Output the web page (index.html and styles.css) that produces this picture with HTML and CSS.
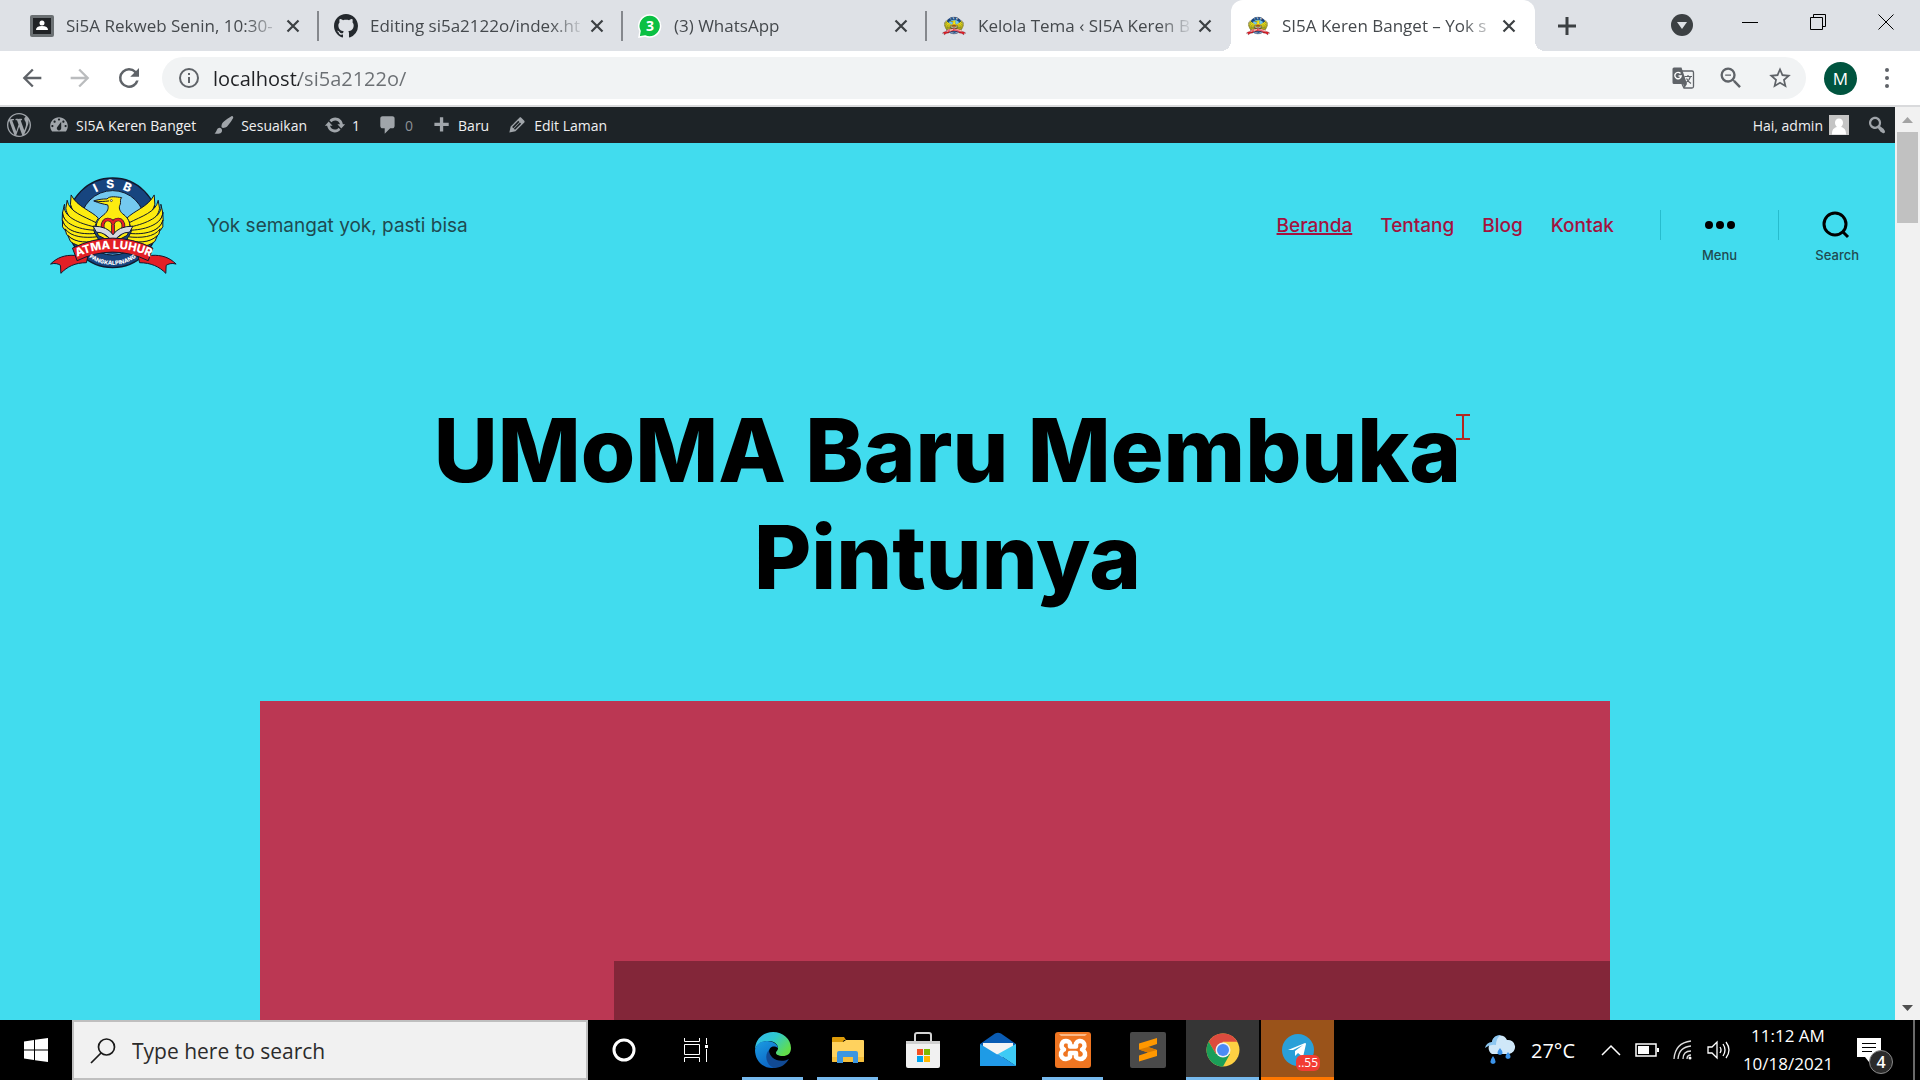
FILE: index.html
```html
<!DOCTYPE html>
<html lang="id">
<head>
<meta charset="utf-8">
<meta name="viewport" content="width=device-width, initial-scale=1">
<title>SI5A Keren Banget – Yok semangat yok, pasti bisa</title>
<link rel="stylesheet" href="styles.css">
</head>
<body>
<svg class="defs" aria-hidden="true">
  <defs>
    <path id="arc-top" d="M104 114 A105 105 0 0 1 302 114"/>
    <path id="arc-ribbon" d="M90 253 Q205 199 322 253"/>
    <path id="arc-bottom" d="M118 240 A122 122 0 0 0 288 240"/>
    <g id="wing">
      <path d="M78 64 C96 100 140 112 160 134 L150 150 C110 138 84 124 76 92 Z"/>
      <path d="M66 80 C72 116 116 128 154 148 L148 162 C104 156 66 138 62 104 Z"/>
      <path d="M58 92 C50 130 104 150 148 160 L146 172 C98 172 58 156 52 118 Z"/>
      <path d="M52 116 C52 150 100 168 146 170 L150 182 C108 186 62 176 51 140 Z"/>
      <path d="M52 140 C60 174 108 184 150 180 L156 192 C116 200 70 194 52 160 Z"/>
      <path d="M60 166 C78 192 120 194 156 190 L162 202 C126 214 84 208 64 182 Z"/>
      <path d="M68 186 C92 210 130 208 162 200 L172 212 C140 226 98 222 76 204 Z"/>
    </g>
    <symbol id="crest" viewBox="12 10 384 292">
      <circle cx="203" cy="148" r="135" fill="#17457f" stroke="#10182c" stroke-width="4"/>
      <circle cx="203" cy="148" r="97" fill="#74c9ef" stroke="#10182c" stroke-width="3"/>
      <path d="M124 200 A96 96 0 0 0 282 200 L282 170 L124 170Z" fill="#17457f"/>
      <g fill="#fdec10" stroke="#10182c" stroke-width="3" stroke-linejoin="round">
        <use href="#wing"/>
        <use href="#wing" transform="translate(406 0) scale(-1 1)"/>
        <path d="M146 82 C164 76 180 76 186 76 C194 66 214 70 230 72 C224 78 228 84 226 92 C220 102 224 112 232 120 C256 136 262 160 246 186 L204 208 L160 186 C148 160 152 140 176 124 C188 114 192 104 188 94 C176 92 160 88 146 82Z"/>
        <path d="M148 83 C166 84 178 84 192 82" fill="none"/>
      </g>
      <circle cx="199" cy="81" r="3" fill="#fff" stroke="#10182c" stroke-width="2"/>
      <path d="M204 194 C162 178 168 138 188 138 Q202 138 204 152 Q206 138 220 138 C240 138 246 178 204 194Z M204 154 V190" fill="#fdec10" stroke="#10182c" stroke-width="11"/>
      <path d="M204 194 C162 178 168 138 188 138 Q202 138 204 152 Q206 138 220 138 C240 138 246 178 204 194Z M204 154 V190" fill="none" stroke="#e31f26" stroke-width="7"/>
      <path d="M144 158 Q188 158 204 184 Q220 158 264 158 L254 176 Q224 176 204 208 Q184 176 154 176Z" fill="#d5d9df" stroke="#10182c" stroke-width="3"/>
      <g fill="#e31f26" stroke="#10182c" stroke-width="3" stroke-linejoin="round">
        <path d="M88 246 C60 244 36 252 16 272 C30 268 40 272 46 276 L47 300 C66 280 90 268 124 268 L128 250Z"/>
        <path d="M320 246 C350 244 374 252 394 272 C380 268 370 272 364 276 L363 300 C344 280 318 268 284 268 L280 250Z"/>
        <path d="M82 224 Q203 164 324 224 L310 262 Q203 210 96 262Z"/>
      </g>
      <g class="crest-text">
        <text font-size="36"><textPath href="#arc-top" startOffset="50%" text-anchor="middle">I&#160;&#160;&#160;S&#160;&#160;&#160;B</textPath></text>
        <text font-size="34"><textPath href="#arc-ribbon" startOffset="50%" text-anchor="middle">ATMA LUHUR</textPath></text>
        <text font-size="17"><textPath href="#arc-bottom" startOffset="50%" text-anchor="middle">PANGKALPINANG</textPath></text>
      </g>
    </symbol>
    <symbol id="close" viewBox="0 0 14 14"><path d="M1.500 1.500l11 11m0-11l-11 11" stroke="#3c4043" stroke-width="2.200" fill="none"/></symbol>
  </defs>
</svg>

<header class="tabstrip">
  <div class="tabs">
    <div class="tab">
      <svg class="favicon" viewBox="0 0 24 24"><rect y="1" width="24" height="22" rx="2" fill="#6b7073"/><rect x="3" y="4" width="18" height="16" fill="#202225"/><circle cx="12" cy="9" r="2.500" fill="#fff"/><path d="M6 16q0-4 6-4t6 4z" fill="#fff"/></svg>
      <a class="tab-title" href="#">Si5A Rekweb Senin, 10:30-</a>
      <button class="tab-close" aria-label="Tutup tab"><svg><use href="#close"/></svg></button>
    </div>
    <div class="tab">
      <svg class="favicon" viewBox="0 0 16 16"><path fill="#24292e" d="M8 0C3.580 0 0 3.580 0 8c0 3.540 2.290 6.530 5.470 7.590.4.070.55-.17.55-.38 0-.19-.01-.82-.01-1.490-2.010.37-2.530-.49-2.690-.94-.09-.23-.48-.94-.82-1.130-.28-.15-.68-.52-.01-.53.63-.01 1.080.58 1.230.82.72 1.210 1.870.87 2.330.66.07-.52.28-.87.51-1.070-1.780-.2-3.640-.89-3.640-3.950 0-.87.31-1.590.82-2.150-.08-.2-.36-1.020.08-2.120 0 0 .67-.21 2.200.82.64-.18 1.320-.27 2-.27s1.360.09 2 .27c1.530-1.040 2.200-.82 2.200-.82.44 1.100.16 1.920.08 2.120.51.56.82 1.270.82 2.150 0 3.070-1.870 3.750-3.650 3.950.29.25.54.73.54 1.480 0 1.070-.01 1.930-.01 2.200 0 .21.15.46.55.38A8.010 8.010 0 0 0 16 8c0-4.420-3.580-8-8-8z"/></svg>
      <a class="tab-title" href="#">Editing si5a2122o/index.ht</a>
      <button class="tab-close" aria-label="Tutup tab"><svg><use href="#close"/></svg></button>
    </div>
    <div class="tab">
      <svg class="favicon" viewBox="0 0 24 24"><path d="M12 1a11 11 0 1 1-5 21L1 23l1-6A11 11 0 0 1 12 1z" fill="#0ac043" stroke="#fff" stroke-width="1.500"/><text x="12" y="17" class="wa-count">3</text></svg>
      <a class="tab-title" href="#">(3) WhatsApp</a>
      <button class="tab-close" aria-label="Tutup tab"><svg><use href="#close"/></svg></button>
    </div>
    <div class="tab">
      <svg class="favicon"><use href="#crest"/></svg>
      <a class="tab-title" href="#">Kelola Tema ‹ SI5A Keren B</a>
      <button class="tab-close" aria-label="Tutup tab"><svg><use href="#close"/></svg></button>
    </div>
    <div class="tab active">
      <svg class="favicon"><use href="#crest"/></svg>
      <a class="tab-title" href="#">SI5A Keren Banget – Yok s</a>
      <button class="tab-close" aria-label="Tutup tab"><svg><use href="#close"/></svg></button>
    </div>
    <button class="new-tab" aria-label="Tab baru"><svg width="18" height="18" viewBox="0 0 18 18"><path d="M9 0v18M0 9h18" stroke="#3c4043" stroke-width="3"/></svg></button>
  </div>
  <div class="window-controls">
    <button class="tab-search" aria-label="Cari tab"><svg width="22" height="22" viewBox="0 0 22 22"><circle cx="11" cy="11" r="11" fill="#3c4043"/><path d="M6 8h10l-5 7z" fill="#dee1e6"/></svg></button>
    <button aria-label="Minimize"><svg width="16" height="16" viewBox="0 0 16 16"><path d="M0 8.500h16" stroke="#000"/></svg></button>
    <button aria-label="Restore"><svg width="16" height="16" viewBox="0 0 16 16"><path d="M.5 3.500h12v12H.5zM3.500 3V.5h12v12H13" fill="none" stroke="#000"/></svg></button>
    <button aria-label="Close"><svg width="16" height="16" viewBox="0 0 16 16"><path d="M.5.5l15 15m0-15l-15 15" stroke="#000"/></svg></button>
  </div>
</header>

<nav class="toolbar" aria-label="Browser">
  <button aria-label="Kembali"><svg width="28" height="28" viewBox="0 0 24 24"><path fill="#5f6368" d="M20 11H7.830l5.590-5.590L12 4l-8 8 8 8 1.410-1.410L7.830 13H20z"/></svg></button>
  <button aria-label="Maju"><svg width="28" height="28" viewBox="0 0 24 24"><path fill="#babcbe" d="M12 4l-1.410 1.410L16.170 11H4v2h12.170l-5.580 5.590L12 20l8-8z"/></svg></button>
  <button aria-label="Muat ulang"><svg width="30" height="30" viewBox="0 0 24 24"><path fill="#5f6368" d="M17.650 6.350A7.960 7.960 0 0 0 12 4a8 8 0 1 0 7.730 10h-2.080A6 6 0 1 1 12 6c1.660 0 3.140.69 4.220 1.780L13 11h7V4z"/></svg></button>
  <div class="omnibox">
    <svg width="24" height="24" viewBox="0 0 24 24"><path fill="#5f6368" d="M11 7h2v2h-2zm0 4h2v6h-2zm1-9a10 10 0 1 0 0 20 10 10 0 0 0 0-20zm0 18a8 8 0 1 1 0-16 8 8 0 0 1 0 16z"/></svg>
    <input type="text" aria-label="Alamat" value="localhost/si5a2122o/">
    <div class="omnibox-actions">
      <button aria-label="Terjemahkan"><svg width="24" height="24" viewBox="0 0 24 24"><path d="M10 5h11a1.500 1.500 0 0 1 1.500 1.500v14A1.500 1.500 0 0 1 21 22h-8l-2-4" fill="none" stroke="#5f6368" stroke-width="1.300"/><path fill="#5f6368" d="M3 1.500h7.500L16 18H3a1.500 1.500 0 0 1-1.500-1.500V3A1.500 1.500 0 0 1 3 1.500zM12 18l1.500 4 2.500-4z"/><path d="M9.500 7.500A3.200 3.200 0 1 0 10.200 10H7.500" fill="none" stroke="#fff" stroke-width="1.400"/><path d="M13.500 10.500H21M17 9v1.500M19.500 10.500q-1 4-4.500 6M15.500 12.500q1.500 3 4.500 5" fill="none" stroke="#5f6368" stroke-width="1.200"/></svg></button>
      <button aria-label="Zoom"><svg width="28" height="28" viewBox="0 0 24 24"><path fill="#5f6368" d="M15.500 14h-.79l-.28-.27A6.470 6.470 0 0 0 16 9.500 6.500 6.500 0 1 0 9.500 16c1.610 0 3.090-.59 4.230-1.570l.27.28v.79l5 4.990L20.490 19zm-6 0a4.500 4.500 0 1 1 0-9 4.500 4.500 0 0 1 0 9zM7 9h5v1H7z"/></svg></button>
      <button aria-label="Bookmark"><svg width="26" height="26" viewBox="0 0 24 24"><path fill="#5f6368" d="M22 9.240l-7.190-.62L12 2 9.190 8.630 2 9.240l5.460 4.730L5.820 21 12 17.270 18.180 21l-1.630-7.030zM12 15.400l-3.760 2.270 1-4.280-3.320-2.880 4.380-.38L12 6.100l1.710 4.040 4.380.38-3.320 2.880 1 4.280z"/></svg></button>
    </div>
  </div>
  <button class="profile" aria-label="Profil M">M</button>
  <button aria-label="Menu"><svg width="24" height="24" viewBox="0 0 24 24" fill="#5f6368"><circle cx="12" cy="4" r="2"/><circle cx="12" cy="12" r="2"/><circle cx="12" cy="20" r="2"/></svg></button>
</nav>

<div class="viewport">
  <div class="page">
    <nav class="adminbar" aria-label="Toolbar admin">
      <a href="#" aria-label="WordPress"><svg class="wp" viewBox="0 0 20 20"><path d="M20 10c0-5.510-4.490-10-10-10C4.480 0 0 4.490 0 10c0 5.520 4.480 10 10 10 5.510 0 10-4.480 10-10zM7.780 15.370L4.370 6.220c.55-.02 1.170-.08 1.170-.08.5-.06.44-1.130-.06-1.110 0 0-1.450.11-2.370.11-.18 0-.37 0-.58-.01C4.120 2.690 6.870 1.110 10 1.110c2.330 0 4.450.87 6.050 2.340-.68-.11-1.650.39-1.650 1.580 0 .74.45 1.360.9 2.100.35.61.55 1.360.55 2.460 0 1.490-1.400 5-1.400 5l-3.030-8.370c.54-.02.82-.17.82-.17.5-.05.44-1.250-.06-1.220 0 0-1.440.12-2.380.12-.87 0-2.330-.12-2.330-.12-.5-.03-.56 1.200-.06 1.220l.92.08 1.260 3.410zM17.410 10c.24-.64.74-1.870.43-4.250.7 1.290 1.050 2.710 1.050 4.250 0 3.290-1.730 6.240-4.400 7.780.97-2.590 1.940-5.200 2.920-7.780zM6.100 18.090C3.120 16.650 1.110 13.530 1.110 10c0-1.300.23-2.480.72-3.590C3.250 10.300 4.670 14.200 6.100 18.090zm4.030-6.630l2.580 6.980c-.86.29-1.760.45-2.710.45-.79 0-1.570-.11-2.290-.33.81-2.380 1.620-4.740 2.420-7.100z"/></svg></a>
      <a href="#"><svg viewBox="0 0 20 20"><path d="M3.760 16h12.480c1.100-1.370 1.760-3.110 1.760-5 0-4.420-3.580-8-8-8s-8 3.580-8 8c0 1.890.66 3.630 1.760 5zM10 4c.55 0 1 .45 1 1s-.45 1-1 1-1-.45-1-1 .45-1 1-1zM6 6c.55 0 1 .45 1 1s-.45 1-1 1-1-.45-1-1 .45-1 1-1zm8 0c.55 0 1 .45 1 1s-.45 1-1 1-1-.45-1-1 .45-1 1-1zm-5.370 5.550L12 7v6c0 1.100-.9 2-2 2s-2-.9-2-2c0-.57.24-1.080.63-1.450zM4 10c.55 0 1 .45 1 1s-.45 1-1 1-1-.45-1-1 .45-1 1-1zm12 0c.55 0 1 .45 1 1s-.45 1-1 1-1-.45-1-1 .45-1 1-1z"/></svg>SI5A Keren Banget</a>
      <a href="#"><svg viewBox="0 0 20 20"><path d="M18.330 3.570s.27-.8-.31-1.360c-.53-.52-1.220-.24-1.220-.24-.61.3-5.760 3.470-7.670 5.570-.86.96-2.060 3.790-1.090 4.820.92.98 3.960-.17 4.790-1 2.060-2.060 5.210-7.170 5.500-7.790zM1.400 17.650c2.370-1.560 1.460-3.410 3.230-4.640.93-.65 2.220-.62 3.080.29.63.67.8 2.570-.16 3.460-1.570 1.450-4 1.550-6.150.89z"/></svg>Sesuaikan</a>
      <a href="#"><svg viewBox="0 0 20 20"><path d="M10.200 3.280c3.530 0 6.430 2.610 6.920 6h2.080l-3.500 4-3.500-4h2.320c-.45-1.970-2.210-3.450-4.320-3.450-1.450 0-2.730.71-3.540 1.780L4.950 5.660C6.230 4.200 8.110 3.280 10.200 3.280zm-.4 13.440c-3.520 0-6.430-2.610-6.920-6H.8l3.500-4c1.170 1.330 2.330 2.670 3.500 4H5.480c.45 1.970 2.210 3.450 4.320 3.450 1.450 0 2.730-.71 3.540-1.780l1.710 1.950c-1.280 1.460-3.150 2.380-5.250 2.380z"/></svg>1</a>
      <a href="#" class="muted"><svg viewBox="0 0 20 20"><path d="M5 2h9q.82 0 1.410.59T16 4v7q0 .82-.59 1.410T14 13h-2l-5 5v-5H5q-.82 0-1.410-.59T3 11V4q0-.82.59-1.410T5 2z"/></svg>0</a>
      <a href="#"><svg viewBox="0 0 20 20"><path d="M17 8v3h-5v5H9v-5H4V8h5V3h3v5h5z"/></svg>Baru</a>
      <a href="#"><svg viewBox="0 0 20 20"><path d="M13.890 3.390l2.710 2.720c.46.46.42 1.240.03 1.640l-8.010 8.020-5.560 1.160 1.160-5.580s7.600-7.630 7.990-8.030c.39-.39 1.220-.39 1.680.07zm-2.730 2.790l-5.590 5.610 1.110 1.110 5.540-5.650zm-2.970 8.230l5.580-5.600-1.070-1.080-5.590 5.600z"/></svg>Edit Laman</a>
      <a href="#" class="account">Hai, admin<svg viewBox="0 0 20 20"><path fill="#c4c4c4" d="M0 0h20v20H0z"/><path fill="#fff" d="M10 3.500c2.500 0 4 1.800 4 4.300 0 2-1 3.500-2 4.200 3 .8 5 2.500 5 7v.5H3V19c0-4.500 2-6.200 5-7-1-.7-2-2.200-2-4.200 0-2.500 1.500-4.300 4-4.300z"/></svg></a>
      <a href="#" aria-label="Cari"><svg viewBox="0 0 20 20"><path d="M12.140 4.180c1.870 1.870 2.110 4.750.72 6.890.12.1.22.21.36.31.2.16.47.36.81.59.34.24.56.39.66.47.42.31.73.57.94.78.32.32.6.65.84 1 .25.35.44.69.59 1.040.14.35.21.68.18 1-.02.32-.14.59-.36.81s-.49.34-.81.36c-.31.02-.65-.04-.99-.19-.35-.14-.7-.34-1.040-.59-.35-.24-.68-.52-1-.84-.21-.21-.47-.52-.77-.93-.1-.13-.25-.35-.47-.66-.22-.32-.4-.57-.56-.78-.16-.2-.29-.35-.44-.5-2.070 1.090-4.690.76-6.440-.98-2.140-2.150-2.140-5.640 0-7.780 2.150-2.150 5.630-2.150 7.780 0zm-1.410 6.360c1.360-1.370 1.360-3.580 0-4.950-1.370-1.370-3.590-1.370-4.950 0-1.370 1.370-1.370 3.580 0 4.950 1.360 1.370 3.580 1.370 4.950 0z"/></svg></a>
    </nav>

    <header class="site-header">
      <a href="#" class="site-logo" aria-label="ISB Atma Luhur"><svg><use href="#crest"/></svg></a>
      <p class="tagline">Yok semangat yok, pasti bisa</p>
      <nav class="site-nav" aria-label="Menu utama">
        <a href="#" class="current">Beranda</a>
        <a href="#">Tentang</a>
        <a href="#">Blog</a>
        <a href="#">Kontak</a>
      </nav>
      <div class="toggles">
        <button class="toggle"><svg width="30" height="30" viewBox="0 0 30 30"><circle cx="4" cy="15" r="4"/><circle cx="15" cy="15" r="4"/><circle cx="26" cy="15" r="4"/></svg><span>Menu</span></button>
        <button class="toggle"><svg width="30" height="30" viewBox="0 0 30 30"><circle cx="14" cy="14" r="11" fill="none" stroke="#000" stroke-width="3"/><path d="M22 22l5 5" stroke="#000" stroke-width="3"/></svg><span>Search</span></button>
      </div>
    </header>

    <main class="entry">
      <div class="title-wrap">
        <h1>UMoMA Baru Membuka Pintunya</h1>
        <svg class="cursor" viewBox="0 0 14 26"><path d="M0 1h6l1 1 1-1h6M7 2v22M0 25h6l1-1 1 1h6" fill="none" stroke="#b3261e" stroke-width="2"/></svg>
      </div>
      <div class="artwork"><div class="artwork-block"></div></div>
    </main>
  </div>
  <div class="scrollbar" aria-hidden="true">
    <svg width="11" height="6" viewBox="0 0 11 6"><path d="M0 6h11L5.500 0z" fill="#a3a3a3"/></svg>
    <div class="thumb"></div>
    <svg width="11" height="6" viewBox="0 0 11 6"><path d="M0 0h11L5.500 6z" fill="#505050"/></svg>
  </div>
</div>

<footer class="taskbar">
  <button class="start" aria-label="Start"><svg width="24" height="24" viewBox="0 0 24 24" fill="#fff"><path d="M0 3.500l10-1.500v9.500H0zM11 1.800L24 0v11.500H11zM0 12.500h10V22L0 20.500zM11 12.500h13V24l-13-1.800z"/></svg></button>
  <label class="search">
    <svg width="26" height="26" viewBox="0 0 26 26"><circle cx="16.500" cy="9" r="8" fill="none" stroke="#1a1a1a" stroke-width="1.700"/><path d="M11 15L1 25" stroke="#1a1a1a" stroke-width="1.700"/></svg>
    <input type="search" placeholder="Type here to search" aria-label="Type here to search">
  </label>
  <div class="system">
    <button aria-label="Cortana"><svg width="24" height="24" viewBox="0 0 24 24"><circle cx="12" cy="12" r="10" fill="none" stroke="#fff" stroke-width="3"/></svg></button>
    <button aria-label="Task View"><svg width="24" height="24" viewBox="0 0 24 24" fill="none" stroke="#fff"><path d="M.5 0v3.500h15V0M.5 6.500h15v10H.5zM.5 24v-4.500h15V24M22.500 0v6M22.500 11v13"/><path d="M21 7h3v3h-3z" fill="#fff" stroke="none"/></svg></button>
  </div>
  <div class="apps">
    <button class="running" aria-label="Microsoft Edge"><svg viewBox="0 0 36 36">
      <defs><linearGradient id="edge-a" x1="0" y1="0" x2="1" y2=".6"><stop offset="0" stop-color="#35b8f1"/><stop offset=".5" stop-color="#2fc9d0"/><stop offset="1" stop-color="#62dd4a"/></linearGradient><linearGradient id="edge-b" x1="0" y1="0" x2=".6" y2="1"><stop offset="0" stop-color="#1b9de2"/><stop offset="1" stop-color="#0b63c4"/></linearGradient></defs>
      <path d="M0 18C0 7 8 0 18 0s18 7 18 16c0 6-4 8-8 8-5 0-7-2-7-3 0-2 2-2 2-5s-3-7-9-7C6 9 1 13 0 18z" fill="url(#edge-a)"/>
      <path d="M0 18C1 12 6 9 12 9c7 0 11 4 11 7-2-2-9-3-9 4 0 8 7 12 13 11-3 3-6 5-10 5C7 36 0 28 0 18z" fill="url(#edge-b)"/>
      <path d="M14 18c-5 5-3 15 5 18 7 0 12-4 15-9-10 5-20-1-20-9z" fill="#114a94"/></svg></button>
    <button class="running" aria-label="File Explorer"><svg viewBox="0 0 36 36"><path d="M2 6q0-1 1-1h11l2 3h-2l-2 3H2z" fill="#dd9b09"/><path d="M2 10h11l3-2h17q1 0 1 1v20q0 1-1 1H3q-1 0-1-1z" fill="#ffd25e"/><path d="M2 25h32v4q0 1-1 1H3q-1 0-1-1z" fill="#f6c03c"/><path d="M7 31V21q0-2 2-2h17q2 0 2 2v10h-5v-6H13v6z" fill="#3c96e0"/></svg></button>
    <button aria-label="Microsoft Store"><svg viewBox="0 0 36 36"><path d="M10 12V3q0-2 2-2h12q2 0 2 2v9" fill="none" stroke="#d4d4d4" stroke-width="2"/><path d="M1 9h34v25q0 2-2 2H3q-2 0-2-2z" fill="#f1f1f1"/><path d="M1 9h34v3H1z" fill="#cfcfcf"/><path d="M12 17h6v6h-6z" fill="#f25022"/><path d="M19 17h6v6h-6z" fill="#7fba00"/><path d="M12 24h6v6h-6z" fill="#00a4ef"/><path d="M19 24h6v6h-6z" fill="#ffb900"/></svg></button>
    <button aria-label="Mail"><svg viewBox="0 0 36 36"><path d="M0 12L15 1.500q3-1.500 6 0L36 12v5H0z" fill="#0a5cb4"/><path d="M3 11h30v8L18 28 3 17z" fill="#f4f4f4"/><path d="M0 12l36 22H0z" fill="#1e9be6"/><path d="M36 12v22L18 22z" fill="#3dcbf5"/><path d="M0 34h36L18 22z" fill="#2199e8"/></svg></button>
    <button class="running" aria-label="XAMPP"><svg viewBox="0 0 36 36"><rect width="36" height="36" rx="3" fill="#ef7521"/><path d="M4 2h28l-2 2H6z" fill="#fbb885"/><path d="M11 9a4.500 4.500 0 0 0-2 8.500 5 5 0 1 0 6 7.500v-4h6v4a5 5 0 1 0 6-7.500 4.500 4.500 0 1 0-6-6v3h-6v-3a4.500 4.500 0 0 0-4-2.500z" fill="none" stroke="#fff" stroke-width="4.500" stroke-linejoin="round"/></svg></button>
    <button aria-label="Sublime Text"><svg viewBox="0 0 36 36"><rect width="36" height="36" rx="2" fill="#4a4a4a"/><path d="M27 6v6l-9 3 9 3v6L9 29.500v-6l9-3-9-3v-6z" fill="#ff9800"/><path d="M9 17.500l9 3 9-2.500-9-3z" fill="#d97a00"/></svg></button>
    <button class="running current" aria-label="Google Chrome"><svg viewBox="0 0 36 36"><circle cx="18" cy="18" r="16.500" fill="#fdd043"/><path d="M3.700 9.800A16.500 16.500 0 0 1 32.300 9.800H18L11 22z" fill="#dd4b3e"/><path d="M3.700 9.800A16.500 16.500 0 0 0 18 34.500l7-12.500H11z" fill="#1b9e58"/><circle cx="18" cy="18" r="7.500" fill="#f1f1f1"/><circle cx="18" cy="18" r="6" fill="#4b8bf5"/></svg></button>
    <button class="running alert" aria-label="Telegram"><svg viewBox="0 0 36 36"><circle cx="18" cy="18" r="16" fill="#2a9fd8"/><path d="M8 18l17-7q1 0 1 1l-3 13-5-4-3 3v-5l8-6-10 5z" fill="#fff"/></svg><span class="count">..55</span></button>
  </div>
  <div class="tray">
    <button class="weather"><svg width="32" height="32" viewBox="0 0 32 32"><path d="M8 20a7 7 0 0 1 0-12 8 8 0 0 1 15-2 7 7 0 0 1 2 14z" fill="#cfe7f8"/><path d="M1 14a7 7 0 0 1 7-6 8 8 0 0 1 9-7q-5 3-5 10-6-1-11 3z" fill="#8cc6f0"/><g fill="#3b93ea"><path d="M16 14q5 6 0 7-5-1 0-7zM24 18q5 6 0 7-5-1 0-7zM9 22q5 7 0 8-5-1 0-8z"/></g></svg><span>27°C</span></button>
    <button aria-label="Tampilkan ikon"><svg width="20" height="12" viewBox="0 0 20 12"><path d="M1 11l9-9 9 9" fill="none" stroke="#fff" stroke-width="1.500"/></svg></button>
    <button aria-label="Baterai"><svg width="24" height="14" viewBox="0 0 24 14"><path d="M1 1h20v12H1z" fill="none" stroke="#fff" stroke-width="1.500"/><path d="M3 3h11v8H3zM22 5h2v4h-2z" fill="#fff"/></svg></button>
    <button aria-label="Wi-Fi"><svg width="20" height="20" viewBox="0 0 20 20" fill="none" stroke="#ddd" stroke-width="1.300"><path d="M1 19Q2 3 18 1M5 19Q6 7 18 6M10 19q0-8 8-8M14 19q0-4 4-4"/><circle cx="17" cy="18" r="1.500" fill="#fff" stroke="none"/></svg></button>
    <button aria-label="Volume"><svg width="24" height="20" viewBox="0 0 24 20" fill="none" stroke="#fff" stroke-width="1.300"><path d="M1 7h4l5-5v16l-5-5H1zM13 7q2 3 0 6M16 4q4 6 0 12M19 2q6 8 0 16"/></svg></button>
    <button class="clock"><time>11:12 AM</time><time>10/18/2021</time></button>
    <button class="notifications" aria-label="Notifikasi"><svg width="24" height="24" viewBox="0 0 24 24"><path d="M0 0h24v19h-8l-4 5-4-5H0z" fill="#fff"/><path d="M5 5.500h14M5 9.500h14M5 13.500h10" stroke="#000"/></svg><span class="badge">4</span></button>
  </div>
</footer>
</body>
</html>
```

FILE: styles.css
```css
* { box-sizing: border-box; }

body {
  margin: 0;
  height: 100vh;
  display: flex;
  flex-direction: column;
  overflow: hidden;
  font-family: "Open Sans", "Noto Sans", sans-serif;
  color: #202124;
}

button {
  display: flex;
  align-items: center;
  justify-content: center;
  padding: 0;
  border: 0;
  background: none;
  font: inherit;
  color: inherit;
}

a { color: inherit; text-decoration: none; }
svg { display: block; flex: none; }
.defs { position: absolute; width: 0; height: 0; }
.crest-text { fill: #fff; font-family: Inter, sans-serif; font-weight: 800; }
.wa-count { fill: #fff; font: bold 14px "Open Sans", sans-serif; text-anchor: middle; }

/* Tab strip */
.tabstrip {
  display: flex;
  justify-content: space-between;
  height: 51px;
  flex: none;
  background: #dee1e6;
}
.tabs { display: flex; flex: 1; min-width: 0; padding-left: 15px; }
.tab {
  position: relative;
  display: flex;
  align-items: center;
  flex: 0 1 304px;
  min-width: 0;
  padding: 0 19px 0 15px;
}
.tab:not(.active)::after {
  content: "";
  position: absolute;
  right: 0;
  width: 2px;
  height: 30px;
  background: #85888d;
}
.tab:nth-child(4)::after { display: none; }
.tab.active { background: #fff; border-radius: 12px 12px 0 0; }
.tab.active::before,
.tab.active::after {
  content: "";
  position: absolute;
  bottom: 0;
  width: 10px;
  height: 10px;
}
.tab.active::before { left: -10px; background: radial-gradient(circle at 0 0, transparent 10px, #fff 10px); }
.tab.active::after { right: -10px; background: radial-gradient(circle at 100% 0, transparent 10px, #fff 10px); }
.favicon { width: 24px; height: 24px; }
.tab-title {
  flex: 1;
  min-width: 0;
  margin: 0 4px 0 12px;
  overflow: hidden;
  white-space: nowrap;
  font-size: 17px;
  color: #45494d;
  mask-image: linear-gradient(90deg, #000 calc(100% - 36px), transparent);
}
.tab-close svg { width: 14px; height: 14px; }
.new-tab { width: 64px; }
.window-controls { display: flex; }
.window-controls button { width: 68px; height: 44px; }
.window-controls .tab-search { width: 68px; height: 50px; }

/* Toolbar */
.toolbar {
  display: flex;
  align-items: center;
  gap: 20px;
  flex: none;
  height: 56px;
  padding: 0 21px 0 18px;
  border-bottom: 2px solid #d9dadc;
  background: #fff;
}
.omnibox {
  display: flex;
  align-items: center;
  gap: 12px;
  flex: 1;
  height: 42px;
  margin-left: -2px;
  padding: 0 13px 0 15px;
  border-radius: 21px;
  background: #f1f3f4;
}
.omnibox input {
  flex: 1;
  min-width: 0;
  padding: 0;
  border: 0;
  outline: 0;
  font: inherit;
  font-size: 20px;
  color: transparent;
  background: linear-gradient(90deg, #202124 86px, #6b6f73 86px);
  -webkit-background-clip: text;
  background-clip: text;
}
.omnibox-actions { display: flex; align-items: center; gap: 22px; }
.profile {
  width: 33px;
  height: 33px;
  border-radius: 50%;
  background: #00543f;
  color: #fff;
  font-size: 17px;
}
.toolbar > .profile { margin: 0 -2px; }

/* Page viewport */
.viewport { display: flex; flex: 1; min-height: 0; }
.page {
  flex: 1;
  min-width: 0;
  overflow: hidden;
  display: flex;
  flex-direction: column;
  background: #41dcee;
}
.scrollbar {
  display: flex;
  flex-direction: column;
  align-items: center;
  width: 25px;
  padding: 10px 0 9px;
  background: #f1f1f1;
}
.thumb { width: 21px; height: 91px; margin: 9px 0 auto; background: #c1c1c1; }

/* Admin bar */
.adminbar {
  display: flex;
  align-items: center;
  gap: 17px;
  flex: none;
  height: 36px;
  padding: 0 7px;
  background: #1d2327;
  color: #f0f0f1;
  font-size: 14px;
}
.adminbar a { display: flex; align-items: center; gap: 6px; }
.adminbar svg { width: 22px; height: 22px; fill: #a0a5aa; }
.adminbar .wp { width: 24px; height: 24px; }
.adminbar .muted { color: #8c9196; }
.adminbar .account { margin-left: auto; }
.adminbar .account svg { width: 20px; height: 20px; }

/* Site header */
.site-header {
  display: flex;
  align-items: center;
  flex: none;
  height: 164px;
  padding: 0 36px 0 49px;
  font-family: Inter, sans-serif;
}
.site-logo svg { width: 128px; height: 97px; }
.tagline { margin: 0 0 0 30px; font-size: 19px; color: #1f4a50; }
.site-nav {
  display: flex;
  gap: 28px;
  margin-left: auto;
  font-size: 19px;
  font-weight: 500;
  color: #a4123f;
}
.site-nav .current { text-decoration: underline; text-decoration-thickness: 2px; }
.toggles { display: flex; height: 30px; margin-left: 46px; }
.toggle {
  position: relative;
  width: 118px;
  height: 30px;
  border-left: 1px solid #27bccd;
}
.toggle:last-child { width: 81px; justify-content: flex-end; padding-right: 8px; }
.toggle span {
  position: absolute;
  top: 36px;
  left: 0;
  right: 0;
  font-size: 13px;
  line-height: 18px;
  font-weight: 500;
  color: #1f4a50;
}
.toggle:last-child span { left: auto; }

/* Entry */
.entry { display: flex; flex-direction: column; flex: 1; min-height: 0; }
.title-wrap { position: relative; align-self: center; width: 1046px; max-width: 100%; margin: 90px 0; }
h1 {
  margin: 0;
  font: 800 88px/107px Inter, sans-serif;
  text-align: center;
  color: #000;
}
.cursor { position: absolute; top: 17px; right: 1px; width: 14px; height: 26px; }
.artwork {
  display: flex;
  flex: 1;
  margin: 0 285px 0 260px;
  padding: 260px 0 0 354px;
  background: #bb3753;
}
.artwork-block { flex: 1; background: #832639; }

/* Taskbar */
.taskbar {
  display: flex;
  flex: none;
  height: 60px;
  background: #000;
  color: #fff;
}
.start { width: 72px; }
.search {
  display: flex;
  align-items: center;
  gap: 16px;
  flex: 0 1 516px;
  padding: 2px 16px 0;
  border: 2px solid #bfbfbf;
  background: #f1f1f1;
}
.search input {
  flex: 1;
  min-width: 0;
  padding: 0;
  border: 0;
  outline: 0;
  background: none;
  font: inherit;
  font-size: 21px;
}
.search input::placeholder { color: #2b2b2b; opacity: 1; }
.system { display: flex; }
.system button { width: 72px; }
.apps { display: flex; gap: 2px; padding-left: 4px; }
.apps button { position: relative; width: 73px; }
.apps svg { width: 36px; height: 36px; }
.apps .running::after {
  content: "";
  position: absolute;
  left: 6px;
  right: 6px;
  bottom: 0;
  height: 3px;
  background: #76b9ed;
}
.apps .current { background: #353535; }
.apps .alert { background: #9a531a; }
.apps .current::after, .apps .alert::after { left: 0; right: 0; }
.apps .alert::after { background: #ff7700; }
.count {
  position: absolute;
  left: 35px;
  top: 35px;
  padding: 0 2px;
  border-radius: 6px;
  background: #f23c34;
  font-size: 12px;
  line-height: 16px;
}
.tray {
  display: flex;
  gap: 14px;
  margin: 0 5px 0 auto;
  border-right: 2px solid #6a6a6a;
  padding-right: 32px;
}
.weather { gap: 15px; margin-right: 12px; font-size: 20px; }
.clock {
  flex-direction: column;
  width: 86px;
  font-size: 17px;
  line-height: 28px;
}
.notifications { position: relative; margin-left: 12px; }
.badge {
  position: absolute;
  left: 12px;
  top: 30px;
  width: 24px;
  height: 24px;
  border: 1px solid #8a8a8a;
  border-radius: 50%;
  background: #2b2b2b;
  font-size: 16px;
  font-weight: 600;
  line-height: 22px;
}
```
